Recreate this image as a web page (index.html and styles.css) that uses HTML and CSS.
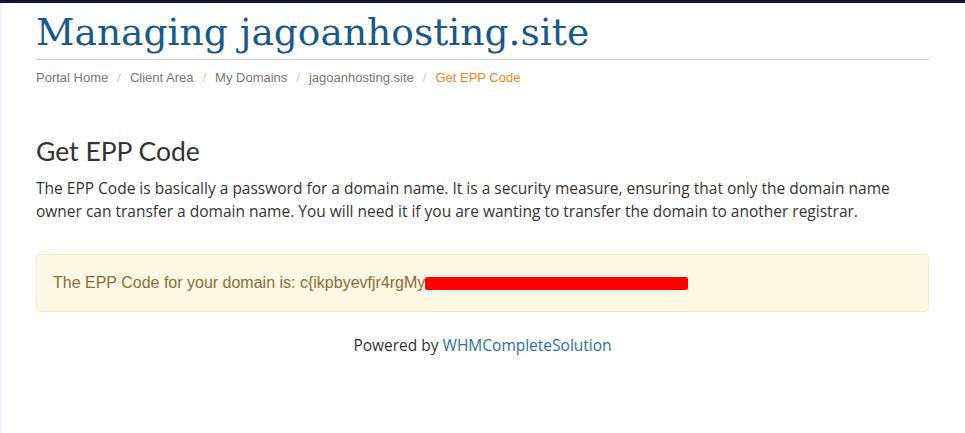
FILE: index.html
```html
<!DOCTYPE html>
<html lang="en">
<head>
    <title>Get EPP Code</title>
    <link rel="stylesheet" href="styles.css">
</head>
<body>
    <div class="topbar"></div>
    <div class="pagina">
        <div class="contenedor">
            <h1 class="titulo">Managing jagoanhosting.site</h1>
            <ol class="migas">
                <li><a href="#">Portal Home</a></li>
                <li><a href="#">Client Area</a></li>
                <li><a href="#">My Domains</a></li>
                <li><a href="#">jagoanhosting.site</a></li>
                <li class="activo">Get EPP Code</li>
            </ol>

            <h2 class="subtitulo">Get EPP Code</h2>
            <p class="texto">The EPP Code is basically a password for a domain name. It is a security measure, ensuring that only the domain name owner can transfer a domain name. You will need it if you are wanting to transfer the domain to another registrar.</p>

            <div class="alerta">
                The EPP Code for your domain is: c{ikpbyevfjr4rgMy<span class="tachado"></span>
            </div>

            <p class="pie">Powered by <a href="#">WHMCompleteSolution</a></p>
        </div>
    </div>
</body>
</html>
```

FILE: styles.css
```css
body{
    margin: 0;
    background-color: white;
    font-family: "Open Sans", sans-serif;
    color: #333;
}

.topbar{
    height: 3px;
    background-color: #15163a;
}

.pagina{
    box-shadow: inset 2px 0 0 #f5f0fa;
    min-height: 430px;
}

.contenedor{
    width: 893px;
    margin: auto;
}

.titulo{
    font-family: "DejaVu Serif", serif;
    font-weight: normal;
    font-size: 37.6px;
    color: #1b5a86;
    margin: 0;
    padding-top: 6px;
    padding-bottom: 4px;
    border-bottom: 1px solid #cccccc;
    line-height: 46px;
}

.migas{
    list-style: none;
    margin: 0;
    padding: 10px 0;
    font-family: "Liberation Sans", sans-serif;
    font-size: 13px;
    display: flex;
}

.migas li + li::before{
    content: "/";
    color: #ccc;
    padding: 0 9px;
}

.migas a{
    color: #777;
    text-decoration: none;
}

.migas .activo{color: #f7841e;}

.subtitulo{
    font-family: "Lato", sans-serif;
    font-weight: normal;
    font-size: 26.5px;
    margin: 40px 0 10px 0;
    color: #333;
}

.texto{
    font-size: 15.5px;
    line-height: 23px;
    margin: 0 0 31px 0;
}

.alerta{
    background-color: #fcf8e3;
    border: 1px solid #faebcc;
    border-radius: 4px;
    color: #8a6d3b;
    padding: 18px 16px;
    font-family: "Liberation Sans", sans-serif;
    font-size: 16px;
    line-height: 20px;
}

.tachado{
    display: inline-block;
    width: 263px;
    height: 13px;
    background-color: red;
    border-radius: 2px;
    vertical-align: -2px;
}

.pie{
    text-align: center;
    font-size: 15.5px;
    margin-top: 22px;
}

.pie a{
    color: #2a6fa8;
    text-decoration: none;
}
```
